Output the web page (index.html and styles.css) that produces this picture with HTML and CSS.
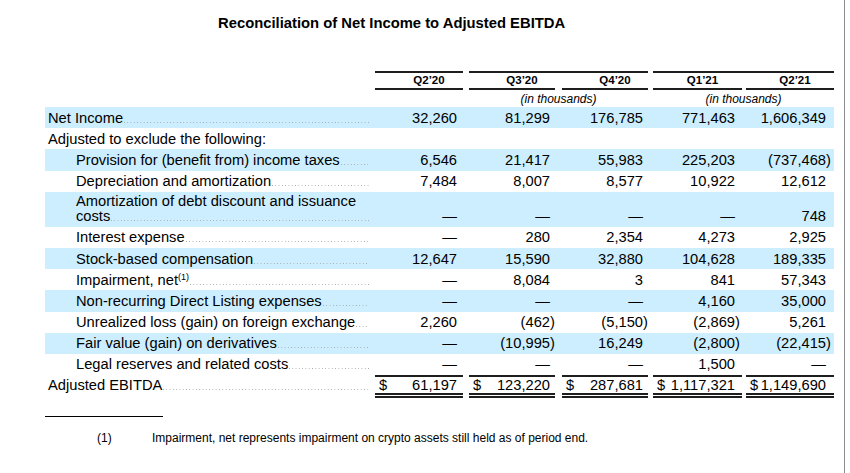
FILE: index.html
```html
<!DOCTYPE html>
<html lang="en">
<head>
<meta charset="utf-8">
<title>Reconciliation of Net Income to Adjusted EBITDA</title>
<link rel="stylesheet" href="styles.css">
</head>
<body>
<div class="page">
  <h1 class="title">Reconciliation of Net Income to Adjusted EBITDA</h1>
  <table class="recon">
    <colgroup>
      <col class="w-label"><col class="w-c1"><col class="w-g1"><col class="w-c2"><col class="w-g2"><col class="w-c3"><col class="w-g3"><col class="w-c4"><col class="w-g4"><col class="w-c5">
    </colgroup>
    <thead>
      <tr class="qhead">
        <th class="blank"></th>
        <th class="q">Q2’20</th>
        <th class="blank"></th>
        <th class="q">Q3’20</th>
        <th class="gap-top"></th>
        <th class="q">Q4’20</th>
        <th class="blank"></th>
        <th class="q">Q1’21</th>
        <th class="gap-top"></th>
        <th class="q">Q2’21</th>
      </tr>
      <tr class="units">
        <td></td><td></td><td></td>
        <td class="unit" colspan="3">(in thousands)</td>
        <td></td>
        <td class="unit" colspan="3">(in thousands)</td>
      </tr>
    </thead>
    <tbody>
      <tr class="shade">
        <td class="label"><div class="lab"><span>Net Income</span><span class="dots"></span></div></td>
        <td class="num">32,260</td><td></td><td class="num">81,299</td><td></td><td class="num">176,785</td><td></td><td class="num">771,463</td><td></td><td class="num">1,606,349</td>
      </tr>
      <tr>
        <td class="label"><div class="lab"><span>Adjusted to exclude the following:</span></div></td>
        <td></td><td></td><td></td><td></td><td></td><td></td><td></td><td></td><td></td>
      </tr>
      <tr class="shade">
        <td class="label sub"><div class="lab"><span>Provision for (benefit from) income taxes</span><span class="dots"></span></div></td>
        <td class="num">6,546</td><td></td><td class="num">21,417</td><td></td><td class="num">55,983</td><td></td><td class="num">225,203</td><td></td><td class="num">(737,468<span class="rp">)</span></td>
      </tr>
      <tr>
        <td class="label sub"><div class="lab"><span>Depreciation and amortization</span><span class="dots"></span></div></td>
        <td class="num">7,484</td><td></td><td class="num">8,007</td><td></td><td class="num">8,577</td><td></td><td class="num">10,922</td><td></td><td class="num">12,612</td>
      </tr>
      <tr class="shade two-line">
        <td class="label sub"><div>Amortization of debt discount and issuance</div><div class="lab"><span>costs</span><span class="dots"></span></div></td>
        <td class="num">—</td><td></td><td class="num">—</td><td></td><td class="num">—</td><td></td><td class="num">—</td><td></td><td class="num">748</td>
      </tr>
      <tr>
        <td class="label sub"><div class="lab"><span>Interest expense</span><span class="dots"></span></div></td>
        <td class="num">—</td><td></td><td class="num">280</td><td></td><td class="num">2,354</td><td></td><td class="num">4,273</td><td></td><td class="num">2,925</td>
      </tr>
      <tr class="shade">
        <td class="label sub"><div class="lab"><span>Stock-based compensation</span><span class="dots"></span></div></td>
        <td class="num">12,647</td><td></td><td class="num">15,590</td><td></td><td class="num">32,880</td><td></td><td class="num">104,628</td><td></td><td class="num">189,335</td>
      </tr>
      <tr>
        <td class="label sub"><div class="lab"><span>Impairment, net<sup class="fn">(1)</sup></span><span class="dots"></span></div></td>
        <td class="num">—</td><td></td><td class="num">8,084</td><td></td><td class="num">3</td><td></td><td class="num">841</td><td></td><td class="num">57,343</td>
      </tr>
      <tr class="shade">
        <td class="label sub"><div class="lab"><span>Non-recurring Direct Listing expenses</span><span class="dots"></span></div></td>
        <td class="num">—</td><td></td><td class="num">—</td><td></td><td class="num">—</td><td></td><td class="num">4,160</td><td></td><td class="num">35,000</td>
      </tr>
      <tr>
        <td class="label sub"><div class="lab"><span>Unrealized loss (gain) on foreign exchange</span><span class="dots"></span></div></td>
        <td class="num">2,260</td><td></td><td class="num">(462<span class="rp">)</span></td><td></td><td class="num">(5,150<span class="rp">)</span></td><td></td><td class="num">(2,869<span class="rp">)</span></td><td></td><td class="num">5,261</td>
      </tr>
      <tr class="shade">
        <td class="label sub"><div class="lab"><span>Fair value (gain) on derivatives</span><span class="dots"></span></div></td>
        <td class="num">—</td><td></td><td class="num">(10,995<span class="rp">)</span></td><td></td><td class="num">16,249</td><td></td><td class="num">(2,800<span class="rp">)</span></td><td></td><td class="num">(22,415<span class="rp">)</span></td>
      </tr>
      <tr class="subtotal">
        <td class="label sub"><div class="lab"><span>Legal reserves and related costs</span><span class="dots"></span></div></td>
        <td class="num">—</td><td></td><td class="num">—</td><td></td><td class="num">—</td><td></td><td class="num">1,500</td><td></td><td class="num">—</td>
      </tr>
      <tr class="total">
        <td class="label"><div class="lab"><span>Adjusted EBITDA</span><span class="dots"></span></div></td>
        <td class="num"><div class="amt"><span>$</span><span>61,197</span></div></td><td></td>
        <td class="num"><div class="amt"><span>$</span><span>123,220</span></div></td><td></td>
        <td class="num"><div class="amt"><span>$</span><span>287,681</span></div></td><td></td>
        <td class="num"><div class="amt"><span>$</span><span>1,117,321</span></div></td><td></td>
        <td class="num"><div class="amt"><span>$</span><span>1,149,690</span></div></td>
      </tr>
    </tbody>
  </table>
  <div class="rule"></div>
  <div class="footnote">
    <span class="fn-num">(1)</span>
    <span class="fn-text">Impairment, net represents impairment on crypto assets still held as of period end.</span>
  </div>
</div>
</body>
</html>
```

FILE: styles.css
```css
* { box-sizing: border-box; }

html, body {
  margin: 0;
  padding: 0;
  background: #ffffff;
}

body {
  font-family: "Liberation Sans", Arial, Helvetica, sans-serif;
  color: #000000;
}

.page {
  width: 845px;
  height: 473px;
  border-right: 1px solid #8c8c8c;
  overflow: hidden;
}

.title {
  margin: 0;
  padding: 14px 0 0 218px;
  height: 71px;
  font-size: 14.8px;
  line-height: 18px;
  font-weight: bold;
}

.recon {
  margin-left: 45px;
  width: 789px;
  table-layout: fixed;
  border-collapse: separate;
  border-spacing: 0;
  font-size: 14.7px;
}

.w-label { width: 330px; }
.w-c1 { width: 88px; }
.w-g1 { width: 6px; }
.w-c2 { width: 86px; }
.w-g2 { width: 7px; }
.w-c3 { width: 86px; }
.w-g3 { width: 5px; }
.w-c4 { width: 89px; }
.w-g4 { width: 4px; }
.w-c5 { width: 88px; }

.recon th,
.recon td {
  padding: 0;
}

/* header */
.qhead th {
  font-size: 11.5px;
  font-weight: bold;
  line-height: 15px;
  height: 19px;
  text-align: center;
  vertical-align: middle;
}

.qhead th.q {
  border-top: 2px solid #1e1e1e;
  border-bottom: 2px solid #1e1e1e;
}

.qhead th.gap-top {
  border-top: 2px solid #1e1e1e;
}

.qhead th:nth-child(2),
.qhead th:nth-child(4),
.qhead th:nth-child(6) { padding-left: 20px; }

.qhead th:nth-child(8),
.qhead th:nth-child(10) { padding-left: 10px; }

.units td {
  padding-top: 2px;
  line-height: 15px;
}

.unit {
  font-size: 12px;
  font-style: italic;
  text-align: center;
}

/* body rows */
.recon tbody td {
  padding: 3.6px 0;
  line-height: 14px;
  vertical-align: baseline;
}

.recon tbody .two-line td {
  padding: 2.5px 0;
  line-height: 15px;
}

.shade { background: #cceeff; }

.label {
  padding-left: 3px !important;
  padding-right: 6px !important;
}

.label.sub { padding-left: 31px !important; }

.lab {
  display: flex;
}

.lab > span:first-child { white-space: nowrap; }

.dots {
  flex: 1;
  margin-left: 1px;
  background-image: linear-gradient(to right, #a8a8a8 0 1px, transparent 1px);
  background-size: 3.3px 1px;
  background-repeat: repeat-x;
  background-position: 0 calc(100% - 2px);
}

.two-line .dots { background-position: 0 calc(100% - 3px); }

.fn {
  font-size: 9px;
  line-height: 0;
  vertical-align: 5px;
}

.num {
  text-align: right;
  white-space: nowrap;
}

.recon tbody td:nth-child(2) { padding-right: 6px; }
.recon tbody td:nth-child(4) { padding-right: 5px; }
.recon tbody td:nth-child(6) { padding-right: 5px; }
.recon tbody td:nth-child(8) { padding-right: 7px; }
.recon tbody td:nth-child(10) { padding-right: 8px; }

.rp { margin-right: -4.9px; }

.two-line td.num { vertical-align: bottom; }

.subtotal td.num { border-bottom: 2px solid #1e1e1e; }

.recon tbody .total td {
  padding-top: 1px;
  padding-bottom: 1px;
}

.total td.num {
  border-bottom: 5px double #1e1e1e;
}

.amt {
  display: flex;
  justify-content: space-between;
  padding-left: 4px;
}

/* footnote */
.rule {
  width: 118px;
  margin: 18px 0 0 45px;
  border-top: 1px solid #000000;
}

.footnote {
  display: flex;
  margin: 13px 0 0 97px;
  font-size: 12px;
  line-height: 16px;
}

.fn-num { width: 55px; flex: none; }
```
